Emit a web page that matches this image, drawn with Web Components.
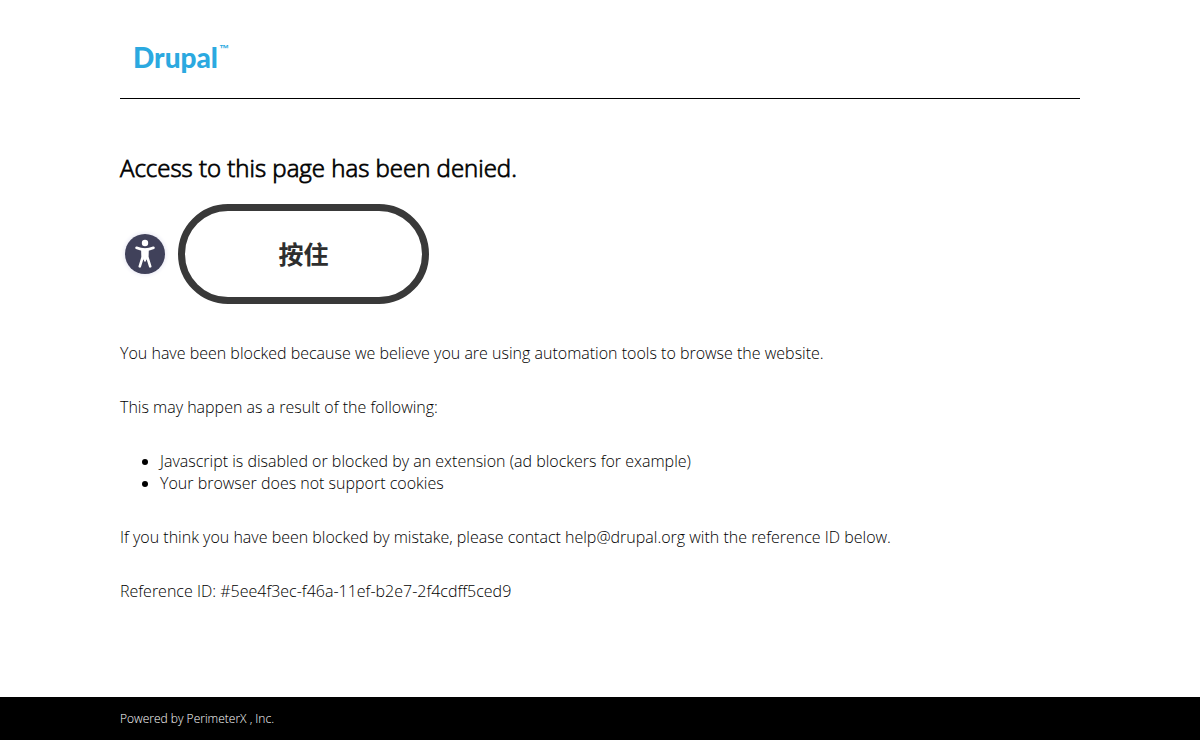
<!DOCTYPE html>
<html lang="en">
<head>
<meta charset="utf-8">
<meta name="viewport" content="width=device-width, initial-scale=1">
<title>Access to this page has been denied.</title>
<style>
body { margin: 0; background: #fff; color: #000; font: 300 16px/22px "Open Sans", sans-serif; }
</style>
</head>
<body>
<denied-page>
  <brand-header slot="header"></brand-header>
  <h1 slot="title">Access to this page has been denied.</h1>
  <hold-challenge slot="challenge">按住</hold-challenge>
  <block-reasons></block-reasons>
  <page-footer slot="footer">Powered by <a href="https://www.perimeterx.com">PerimeterX</a> , Inc.</page-footer>
</denied-page>
<script>
function define(name, markup) {
  const template = document.createElement('template');
  template.innerHTML = markup;
  customElements.define(name, class extends HTMLElement {
    constructor() {
      super();
      this.attachShadow({ mode: 'open' }).append(template.content.cloneNode(true));
    }
  });
}

define('denied-page', `
<style>
  :host { display: flex; flex-direction: column; min-height: 100vh; }
  main { flex: 1; width: 80%; margin: 0 auto; }
  ::slotted(h1) { margin: 51px 0 18px; font-size: 24px; line-height: 36px; font-weight: 300; -webkit-text-stroke: 1px rgba(0, 0, 0, 0.8); }
</style>
<slot name="header"></slot>
<main>
  <slot name="title"></slot>
  <slot name="challenge"></slot>
  <slot></slot>
</main>
<slot name="footer"></slot>`);

define('brand-header', `
<style>
  :host { display: block; width: 80%; margin: 0 auto; }
  header { display: flex; padding: 39px 13px 23px; border-bottom: 1px solid #000; }
  .logo { display: flex; align-items: flex-start; gap: 1px; color: #2ba9e0; font: 900 28px/36px Lato, sans-serif; }
  .tm { font: 700 10px/20px "Liberation Sans", sans-serif; }
</style>
<header><span class="logo">Drupal<span class="tm">™</span></span></header>`);

define('hold-challenge', `
<style>
  :host { display: flex; align-items: center; gap: 13px; padding-left: 5px; }
  button { box-sizing: border-box; padding: 0; cursor: pointer; }
  .access { width: 40px; height: 40px; border: 0; border-radius: 50%; background: #40415a; box-shadow: 0 0 5px #dcdcec; }
  .access svg { display: block; }
  .hold { width: 251px; height: 100px; border: 7px solid #393939; border-radius: 50px; background: #fff; color: #2e2e2e;
    font: 700 25px/36px "Open Sans", "Noto Sans CJK SC", sans-serif; }
</style>
<button class="access" aria-label="Accessible challenge">
  <svg width="40" height="40" viewBox="0 0 40 40" fill="none" stroke="#fff" stroke-linecap="round" stroke-linejoin="round">
    <circle cx="20" cy="9" r="3.2" fill="#fff" stroke="none"/>
    <path d="M11.5 13.8Q20 17.5 28.5 13.8" stroke-width="2.6"/>
    <path d="M17.5 16H22.5L22.3 23 25.2 32.3M17.5 16 17.7 23 14.8 32.3" stroke-width="2.6"/>
    <path d="M17.5 16H22.5L22.5 23 20 27.5 17.5 23Z" fill="#fff" stroke-width="1"/>
  </svg>
</button>
<button class="hold"><slot></slot></button>`);

define('block-reasons', `
<style>
  :host { display: block; padding-top: 38px; }
  p { margin: 0 0 32px; }
  ul { margin: 0 0 32px; padding-left: 40px; }
</style>
<p>You have been blocked because we believe you are using automation tools to browse the website.</p>
<p>This may happen as a result of the following:</p>
<ul>
  <li>Javascript is disabled or blocked by an extension (ad blockers for example)</li>
  <li>Your browser does not support cookies</li>
</ul>
<p>If you think you have been blocked by mistake, please contact help@drupal.org with the reference ID below.</p>
<p>Reference ID: #5ee4f3ec-f46a-11ef-b2e7-2f4cdff5ced9</p>`);

define('page-footer', `
<style>
  :host { display: block; background: #000; color: #fff; font-size: 12px; line-height: 17px; }
  footer { width: 80%; margin: 0 auto; padding: 13px 0; }
  ::slotted(a) { color: inherit; text-decoration: none; }
</style>
<footer><slot></slot></footer>`);
</script>
</body>
</html>
